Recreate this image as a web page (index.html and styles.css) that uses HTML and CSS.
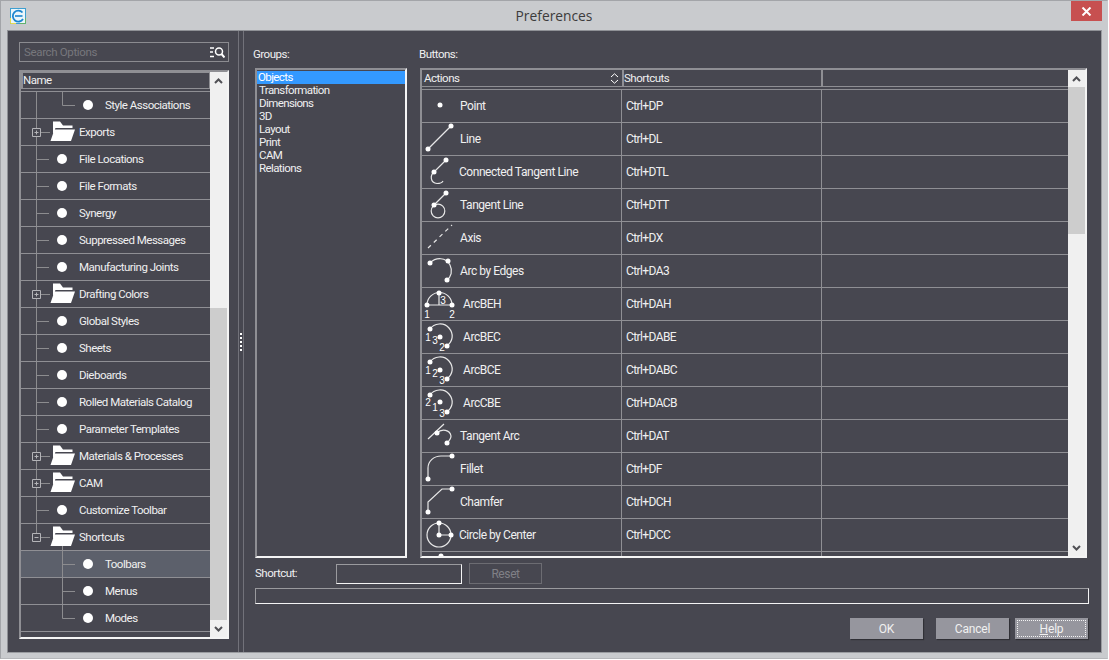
FILE: index.html
```html
<!DOCTYPE html>
<html lang="en">
<head>
<meta charset="utf-8">
<title>Preferences</title>
<link rel="stylesheet" href="styles.css">
</head>
<body>
<svg class="defs" width="0" height="0" aria-hidden="true">
  <defs>
    <path id="folder" d="M32 2.500h7l3 4h9.500v2.500h-17l-2.500 5.500zM33.500 10.500h20.500l-4 11.500h-20.500z"/>
    <g id="leaf1" class="tl"><path d="M15.500 0V26M15.500 13.500H28"/></g>
    <g id="dot1"><circle cx="41" cy="13" r="5" class="fw"/></g>
    <g id="dot2"><circle cx="67" cy="13" r="5" class="fw"/></g>
    <g id="box"><path class="tl" d="M15.500 0V9M15.500 17V26M19.500 13.500H29"/><path class="tb" d="M11.500 9.500h8v8h-8zM13.500 13.500h4M15.500 11.500v4"/></g>
  </defs>
</svg>
<div class="window">
  <header class="titlebar">
    <svg class="logo" width="16" height="16" viewBox="0 0 16 16">
      <rect x=".5" y=".5" width="15" height="15" fill="#eaf6fb" stroke="#3f9fd0"/>
      <path d="M.5 10V15.500H6" fill="none" stroke="#e6d94f"/>
      <path d="M10 15.500H15.500V10" fill="none" stroke="#62b36a"/>
      <path d="M12.500 4.500A5.500 5.500 0 1 0 13 11" fill="none" stroke="#1b86cf" stroke-width="1.800"/>
      <path d="M5 8H12.500" fill="none" stroke="#1b86cf" stroke-width="1.600"/>
    </svg>
    <div class="title">Preferences</div>
    <div class="close">
      <svg width="11" height="9" viewBox="0 0 11 9"><path d="M1.500 .5L9.500 8.500M9.500 .5L1.500 8.500" stroke="#fff" stroke-width="2"/></svg>
    </div>
  </header>
  <main class="panel">
    <section class="left">
      <div class="search">
        <span>Search Options</span>
        <svg width="15" height="11" viewBox="0 0 15 11"><path d="M0 1H4M0 5H3M0 9.500H4" stroke="#fff" stroke-width="1.300"/><circle cx="9" cy="4.500" r="3.500" fill="none" stroke="#fff" stroke-width="1.500"/><path d="M11.500 7L14.500 10.500" stroke="#fff" stroke-width="2"/></svg>
      </div>
      <div class="tree">
        <div class="tree-main">
          <div class="tree-head">Name</div>
          <ul class="rows">
            <li class="row"><svg class="g2"><path class="tl" d="M15.500 0V26M41.500 0V13.500H54"/><use href="#dot2"/></svg>Style Associations</li>
            <li class="row"><svg class="g1"><use href="#box"/><use href="#folder" class="fw"/></svg>Exports</li>
            <li class="row"><svg class="g1"><use href="#leaf1"/><use href="#dot1"/></svg>File Locations</li>
            <li class="row"><svg class="g1"><use href="#leaf1"/><use href="#dot1"/></svg>File Formats</li>
            <li class="row"><svg class="g1"><use href="#leaf1"/><use href="#dot1"/></svg>Synergy</li>
            <li class="row"><svg class="g1"><use href="#leaf1"/><use href="#dot1"/></svg>Suppressed Messages</li>
            <li class="row"><svg class="g1"><use href="#leaf1"/><use href="#dot1"/></svg>Manufacturing Joints</li>
            <li class="row"><svg class="g1"><use href="#box"/><use href="#folder" class="fw"/></svg>Drafting Colors</li>
            <li class="row"><svg class="g1"><use href="#leaf1"/><use href="#dot1"/></svg>Global Styles</li>
            <li class="row"><svg class="g1"><use href="#leaf1"/><use href="#dot1"/></svg>Sheets</li>
            <li class="row"><svg class="g1"><use href="#leaf1"/><use href="#dot1"/></svg>Dieboards</li>
            <li class="row"><svg class="g1"><use href="#leaf1"/><use href="#dot1"/></svg>Rolled Materials Catalog</li>
            <li class="row"><svg class="g1"><use href="#leaf1"/><use href="#dot1"/></svg>Parameter Templates</li>
            <li class="row"><svg class="g1"><use href="#box"/><use href="#folder" class="fw"/></svg>Materials &amp; Processes</li>
            <li class="row"><svg class="g1"><use href="#box"/><use href="#folder" class="fw"/></svg>CAM</li>
            <li class="row"><svg class="g1"><use href="#leaf1"/><use href="#dot1"/></svg>Customize Toolbar</li>
            <li class="row"><svg class="g1"><path class="tl" d="M15.500 0V9M19.500 13.500H29M41.500 22V26"/><path class="tb" d="M11.500 9.500h8v8h-8zM13.500 13.500h4"/><use href="#folder" class="fw"/></svg>Shortcuts</li>
            <li class="row sel"><svg class="g2"><path class="tl" d="M41.500 0V26M41.500 13.500H54"/><use href="#dot2"/></svg>Toolbars</li>
            <li class="row"><svg class="g2"><path class="tl" d="M41.500 0V26M41.500 13.500H54"/><use href="#dot2"/></svg>Menus</li>
            <li class="row"><svg class="g2"><path class="tl" d="M41.500 0V13.500H54"/><use href="#dot2"/></svg>Modes</li>
          </ul>
        </div>
        <div class="vscroll">
          <div class="arrow"><svg width="9" height="6" viewBox="0 0 9 6"><path d="M1 5L4.500 1.500L8 5" class="chev"/></svg></div>
          <div class="track"><div class="thumb thumb-tree"></div></div>
          <div class="arrow"><svg width="9" height="6" viewBox="0 0 9 6"><path d="M1 1L4.500 4.500L8 1" class="chev"/></svg></div>
        </div>
      </div>
    </section>
    <div class="splitter"><div class="grip"></div></div>
    <section class="right">
      <div class="columns">
        <div class="label label-groups">Groups:</div>
        <div class="label label-buttons">Buttons:</div>
        <ul class="groups">
          <li class="active">Objects</li>
          <li>Transformation</li>
          <li>Dimensions</li>
          <li>3D</li>
          <li>Layout</li>
          <li>Print</li>
          <li>CAM</li>
          <li>Relations</li>
        </ul>
        <div class="table">
          <div class="table-main">
            <div class="thead">
              <div class="th th1">Actions
                <svg width="9" height="11" viewBox="0 0 9 11"><path d="M1 4L4.500 .8L8 4M1 7L4.500 10.200L8 7" fill="none" stroke="#fff"/></svg>
              </div>
              <div class="th th2">Shortcuts</div>
              <div class="th th3"></div>
            </div>
            <div class="tbody">
              <div class="tr"><div class="c1"><svg class="ic" viewBox="0 0 38 32"><circle class="d" cx="18" cy="15" r="2.500"/></svg>Point</div><div class="c2">Ctrl+DP</div></div>
              <div class="tr"><div class="c1"><svg class="ic" viewBox="0 0 38 32"><path class="s" d="M6 26L29 3"/><circle class="d" cx="6" cy="26" r="2.500"/><circle class="d" cx="29" cy="3" r="2.500"/></svg>Line</div><div class="c2">Ctrl+DL</div></div>
              <div class="tr"><div class="c1"><svg class="ic back" viewBox="0 0 38 32"><path class="s" d="M24 4L12 16C8 19 8 27 15 27.500C18 27.500 20 27 21 25"/><circle class="d" cx="24" cy="4" r="2.500"/><circle class="d" cx="12" cy="16" r="2.500"/></svg>Connected Tangent Line</div><div class="c2">Ctrl+DTL</div></div>
              <div class="tr"><div class="c1"><svg class="ic" viewBox="0 0 38 32"><path class="s" d="M24 4L12 16"/><circle class="s" cx="16" cy="22" r="6.800"/><circle class="d" cx="24" cy="4" r="2.500"/><circle class="d" cx="12" cy="16" r="2.500"/></svg>Tangent Line</div><div class="c2">Ctrl+DTT</div></div>
              <div class="tr"><div class="c1"><svg class="ic" viewBox="0 0 38 32"><path class="s" stroke-dasharray="4 4" d="M6 26L30 3"/></svg>Axis</div><div class="c2">Ctrl+DX</div></div>
              <div class="tr"><div class="c1"><svg class="ic" viewBox="0 0 38 32"><path class="s" d="M8 8C14 2 24 2 28 10C31 16 29 22 25 25"/><circle class="d" cx="8" cy="8" r="2.500"/><circle class="d" cx="26" cy="6" r="2.500"/><circle class="d" cx="25" cy="25" r="2.500"/></svg>Arc by Edges</div><div class="c2">Ctrl+DA3</div></div>
              <div class="tr"><div class="c1"><svg class="ic fwd" viewBox="0 0 38 32"><path class="s" d="M5 17H30M17 5V17M5 17A12.500 12.500 0 0 1 30 17"/><circle class="d" cx="5" cy="17" r="2.500"/><circle class="d" cx="30" cy="17" r="2.500"/><circle class="d" cx="17" cy="5" r="2.500"/><text x="21" y="16">3</text><text x="5" y="30">1</text><text x="30" y="30">2</text></svg>ArcBEH</div><div class="c2">Ctrl+DAH</div></div>
              <div class="tr"><div class="c1"><svg class="ic fwd" viewBox="0 0 38 32"><path class="s" d="M8 8C12 2 22 1 27 7C32 13 31 20 25 25"/><circle class="d" cx="8" cy="8" r="2.500"/><circle class="d" cx="18" cy="16" r="2.500"/><circle class="d" cx="25" cy="25" r="2.500"/><text x="6" y="20">1</text><text x="13" y="23">3</text><text x="20" y="30">2</text></svg>ArcBEC</div><div class="c2">Ctrl+DABE</div></div>
              <div class="tr"><div class="c1"><svg class="ic fwd" viewBox="0 0 38 32"><path class="s" d="M8 8C12 2 22 1 27 7C32 13 31 20 25 25"/><circle class="d" cx="8" cy="8" r="2.500"/><circle class="d" cx="18" cy="16" r="2.500"/><circle class="d" cx="25" cy="25" r="2.500"/><text x="6" y="20">1</text><text x="13" y="23">2</text><text x="20" y="30">3</text></svg>ArcBCE</div><div class="c2">Ctrl+DABC</div></div>
              <div class="tr"><div class="c1"><svg class="ic fwd" viewBox="0 0 38 32"><path class="s" d="M8 8C12 2 22 1 27 7C32 13 31 20 25 25"/><circle class="d" cx="8" cy="8" r="2.500"/><circle class="d" cx="18" cy="15" r="2.500"/><circle class="d" cx="25" cy="25" r="2.500"/><text x="6" y="19">2</text><text x="13" y="24">1</text><text x="20" y="30">3</text></svg>ArcCBE</div><div class="c2">Ctrl+DACB</div></div>
              <div class="tr"><div class="c1"><svg class="ic" viewBox="0 0 38 32"><path class="s" d="M6 19L22 4M15 13C20 8 28 10 29 16C29 19 27 21 25 23"/><circle class="d" cx="15" cy="13" r="2.500"/><circle class="d" cx="25" cy="23" r="2.500"/></svg>Tangent Arc</div><div class="c2">Ctrl+DAT</div></div>
              <div class="tr"><div class="c1"><svg class="ic" viewBox="0 0 38 32"><path class="s" d="M6 26V15C6 8 12 3 19 3H30"/><circle class="d" cx="30" cy="3" r="2.500"/><circle class="d" cx="6" cy="26" r="2.500"/></svg>Fillet</div><div class="c2">Ctrl+DF</div></div>
              <div class="tr"><div class="c1"><svg class="ic" viewBox="0 0 38 32"><path class="s" d="M6 26V16L20 3H30"/><circle class="d" cx="30" cy="3" r="2.500"/><circle class="d" cx="6" cy="26" r="2.500"/></svg>Chamfer</div><div class="c2">Ctrl+DCH</div></div>
              <div class="tr"><div class="c1"><svg class="ic back" viewBox="0 0 38 32"><circle class="s" cx="17" cy="16" r="12"/><path class="s" d="M17 4V16H29"/><circle class="d" cx="17" cy="4" r="2.500"/><circle class="d" cx="17" cy="16" r="2.500"/><circle class="d" cx="29" cy="16" r="2.500"/></svg>Circle by Center</div><div class="c2">Ctrl+DCC</div></div>
              <div class="tr"><div class="c1"><svg class="ic" viewBox="0 0 38 32"><circle class="d" cx="19" cy="4" r="2.500"/></svg></div><div class="c2"></div></div>
            </div>
          </div>
          <div class="vscroll">
            <div class="arrow"><svg width="9" height="6" viewBox="0 0 9 6"><path d="M1 5L4.500 1.500L8 5" class="chev"/></svg></div>
            <div class="track"><div class="thumb thumb-table"></div></div>
            <div class="arrow"><svg width="9" height="6" viewBox="0 0 9 6"><path d="M1 1L4.500 4.500L8 1" class="chev"/></svg></div>
          </div>
        </div>
      </div>
      <div class="shortcut">
        <span class="shortcut-label">Shortcut:</span>
        <div class="input"></div>
        <div class="reset">Reset</div>
      </div>
      <div class="progress"></div>
      <div class="actions">
        <div class="btn btn-ok">OK</div>
        <div class="btn btn-cancel">Cancel</div>
        <div class="btn btn-help"><span class="focus"><u>H</u>elp</span></div>
      </div>
    </section>
  </main>
</div>
</body>
</html>
```

FILE: styles.css
```css
* { box-sizing: border-box; }
html, body { margin: 0; padding: 0; background: #fff; }
body { font: 11.500px/13px Roboto, "Liberation Sans", sans-serif; letter-spacing: -.5px; color: #f0f0f0; }
ul { list-style: none; margin: 0; padding: 0; }
.defs { display: block; height: 0; }
.fw { fill: #fff; stroke: none; }
.tl { fill: none; stroke: #8c8c8f; stroke-width: 1; }
.tb { fill: none; stroke: #b4b4b8; stroke-width: 1; }

.window { width: 1108px; height: 659px; background: #c9cbce; border: 1px solid #a3a5a9; border-right-color: #c9cbce; border-bottom-color: #b5b7ba; display: flex; flex-direction: column; }
.titlebar { height: 29px; flex: none; display: grid; grid-template-columns: 1fr auto 1fr; align-items: start; }
.logo { margin: 7px 0 0 9px; }
.title { font: 13.800px/30px "Open Sans", sans-serif; letter-spacing: 0; color: #3c3c3c; }
.close { justify-self: end; width: 31px; height: 20px; margin-right: 5px; background: #c75050; display: flex; align-items: center; justify-content: center; }

.panel { flex: none; width: 1095px; height: 623px; margin-left: 6px; background: #474750; border: 1px solid #8f9196; border-right-color: #9a9ca0; border-bottom-color: #9a9ca0; display: flex; }
.left { width: 230px; flex: none; padding: 11px 0 0 11px; display: flex; flex-direction: column; gap: 8px; }
.search { width: 210px; height: 20px; flex: none; border: 1px solid #8b8b90; padding: 1px 3px 0 4px; display: flex; align-items: center; justify-content: space-between; color: #77777d; letter-spacing: -.35px; }
.tree { width: 210px; height: 569px; flex: none; border: 2px solid; border-color: #8f8f94 #f4f4f4 #f4f4f4 #8f8f94; display: flex; }
.tree-main { width: 189px; flex: none; }
.tree-head { height: 17px; border: 1px solid #8f8f94; border-left-width: 2px; line-height: 15px; margin-bottom: 2px; }
.rows { border-top: 1px solid #8f8f94; }
.row { height: 27px; border-bottom: 1px solid #8f8f94; display: flex; align-items: center; white-space: nowrap; padding-bottom: 0; }
.row.sel { background: #5c606b; }
.g1, .g2 { height: 26px; flex: none; display: block; }
.g1 { width: 58px; }
.g2 { width: 84px; }

.vscroll { width: 17px; flex: none; background: #f0f0f0; display: flex; flex-direction: column; }
.arrow { height: 17px; flex: none; display: flex; align-items: center; justify-content: center; }
.chev { fill: none; stroke: #505055; stroke-width: 2; }
.track { flex: 1; min-height: 0; }
.thumb { background: #cdcdcd; }
.thumb-tree { margin-top: 219px; height: 312px; }
.thumb-table { height: 147px; }

.splitter { width: 6px; flex: none; border-left: 1px solid #72727a; border-right: 1px solid #72727a; display: flex; align-items: center; justify-content: center; }
.grip { width: 2px; height: 18px; background: repeating-linear-gradient(to bottom, #fff 0 2px, transparent 2px 4px); }

.right { flex: 1; min-width: 0; padding: 16px 12px 0 11px; display: flex; flex-direction: column; }
.columns { display: grid; grid-template-columns: 152px 667px; grid-template-rows: 21px 490px; column-gap: 13px; }
.label { padding-top: 1px; }
.label-groups { margin-left: -2px; }
.label-buttons { margin-left: -1px; }
.groups { border: 2px solid; border-color: #8f8f94 #f4f4f4 #f4f4f4 #8f8f94; padding-top: 1px; letter-spacing: -.6px; }
.groups li { height: 13px; padding-left: 2px; }
.groups li.active { background: #3399ff; color: #fff; padding-left: 1px; }

.table { border: 2px solid; border-color: #8f8f94 #f4f4f4 #f4f4f4 #8f8f94; display: flex; min-height: 0; }
.table-main { flex: 1; min-width: 0; }
.thead { height: 17px; margin-bottom: 2px; display: flex; border-bottom: 1px solid #8f8f94; }
.th { line-height: 16px; padding-left: 2px; flex: none; }
.th1 { width: 200px; display: flex; justify-content: space-between; align-items: center; padding-right: 3px; }
.th2 { width: 201px; padding-left: 0; border-left: 2px solid #8f8f94; border-right: 2px solid #8f8f94; }
.th3 { flex: 1; }
.tbody { height: 467px; overflow: hidden; border-top: 1px solid #8f8f94; }
.tr { height: 33px; border-bottom: 1px solid #8f8f94; display: flex; background: linear-gradient(#8f8f94, #8f8f94) 399px 0 / 1px 100% no-repeat; }
.c1 { width: 200px; flex: none; border-right: 1px solid #8f8f94; display: flex; align-items: center; white-space: nowrap; font-size: 12px; letter-spacing: -.45px; }
.c2 { padding-left: 4px; display: flex; align-items: center; font-size: 12px; letter-spacing: -.6px; }
.ic { width: 38px; height: 32px; flex: none; display: block; }
.ic.fwd { margin-right: 3px; }
.ic.back { margin-right: -1px; }
.ic .s { fill: none; stroke: #e8e8e8; stroke-width: 1.200; }
.ic .d { fill: #fff; }
.ic text { fill: #fff; font: 10px "Liberation Sans", sans-serif; letter-spacing: 0; text-anchor: middle; }

.shortcut { display: flex; align-items: center; margin-top: 5px; height: 21px; }
.shortcut-label { width: 81px; }
.input { width: 126px; height: 20px; border: 1px solid; border-color: #9a9a9e #f4f4f4 #f4f4f4 #9a9a9e; }
.reset { width: 73px; height: 21px; margin-left: 7px; border: 1px solid #6c6c72; color: #808086; text-align: center; line-height: 20px; font-size: 12px; letter-spacing: -.4px; }
.progress { height: 16px; margin-top: 4px; border: 1px solid; border-color: #9a9a9e #f4f4f4 #f4f4f4 #9a9a9e; }
.actions { display: flex; margin-top: 14px; padding-right: 1px; justify-content: flex-end; }
.btn { width: 73px; height: 21px; background: #96969e; box-shadow: 1px 1px 1px #303036; text-align: center; line-height: 23px; font-size: 12px; letter-spacing: -.2px; }
.btn-cancel { margin-left: 13px; }
.btn-help { margin-left: 6px; padding: 2px; }
.focus { display: block; height: 17px; line-height: 17px; border: 1px dotted #f4f4f4; }
```
